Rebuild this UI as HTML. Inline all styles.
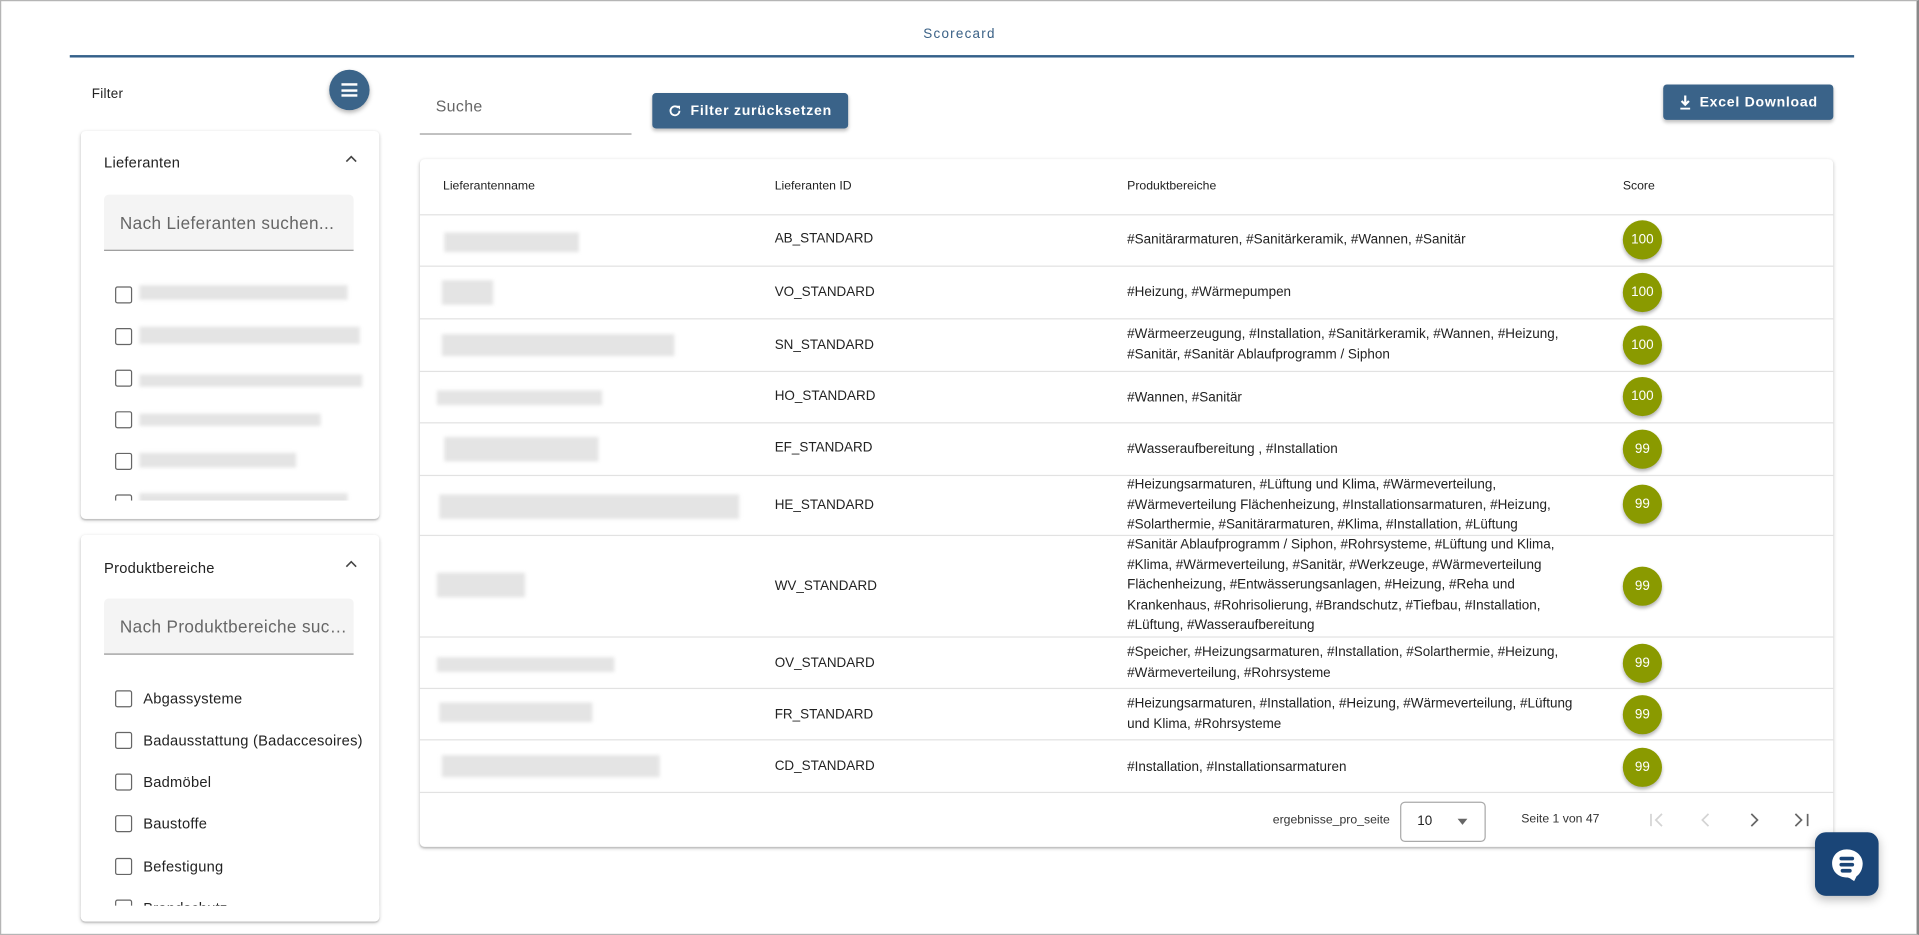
<!DOCTYPE html>
<html><head><meta charset="utf-8">
<style>
html,body{margin:0;padding:0;width:1919px;height:935px;overflow:hidden;background:#fff;}
#s{position:absolute;left:0;top:0;width:1568px;height:764px;transform:scale(1.22385);transform-origin:0 0;font-family:"Liberation Sans",sans-serif;color:#222;}
.a{position:absolute;}
.frame{left:0;top:0;width:1565px;height:762px;border:1px solid #b5b5b5;border-right:2px solid #888;}
.card{background:#fff;border-radius:4px;box-shadow:0 1px 3px rgba(0,0,0,.2),0 1px 1px rgba(0,0,0,.12);}
.btn{background:#3a6389;color:#fff;border-radius:3px;font-size:11.5px;font-weight:bold;letter-spacing:.6px;box-shadow:0 2px 3px rgba(0,0,0,.25);display:flex;align-items:center;justify-content:center;gap:7px;}
.search{background:#f4f4f4;border-bottom:1px solid #888;border-radius:4px 4px 0 0;font-size:14px;color:#666;padding-left:13px;box-sizing:border-box;line-height:46px;letter-spacing:.3px;white-space:nowrap;overflow:hidden;text-overflow:ellipsis;}
.cb{width:12px;height:12px;border:1.5px solid #666;border-radius:2px;}
.blur{background:#e4e4e4;filter:blur(1.5px);}
.lbl{font-size:12px;color:#222;letter-spacing:.2px;}
.hd{font-size:10px;color:#222;}
.row{border-bottom:1px solid #e2e2e2;left:0;width:1155px;}
.cell{font-size:11px;color:#222;line-height:16.5px;}
.sc{width:32px;height:32px;border-radius:50%;background:#8a9a00;color:#fff;font-size:11px;display:flex;align-items:center;justify-content:center;box-shadow:0 2px 3px rgba(0,0,0,.3);}
</style></head><body><div id="s">
<div class="a frame"></div>
<div class="a" style="left:0;width:1568px;top:22px;text-align:center;font-size:11px;color:#3a6186;letter-spacing:1px;">Scorecard</div>
<div class="a" style="left:57px;top:45px;width:1458px;height:2px;background:#34608a;"></div>

<div class="a lbl" style="left:75px;top:71px;font-size:11px;">Filter</div>
<div class="a" style="left:269px;top:57px;width:33px;height:33px;border-radius:50%;background:#3b6489;box-shadow:0 2px 4px rgba(0,0,0,.3);">
 <div class="a" style="left:10px;top:11px;width:13px;height:2px;background:#fff"></div>
 <div class="a" style="left:10px;top:15.5px;width:13px;height:2px;background:#fff"></div>
 <div class="a" style="left:10px;top:20px;width:13px;height:2px;background:#fff"></div>
</div>

<div class="a card" style="left:66px;top:107px;width:244px;height:317px;overflow:hidden;">
 <div class="a lbl" style="left:19px;top:19px;">Lieferanten</div>
 <svg class="a" style="left:216px;top:19px" width="10" height="8"><path d="M1 6L5 2L9 6" stroke="#444" stroke-width="1.3" fill="none"/></svg>
 <div class="a search" style="left:19px;top:52px;width:204px;height:46px;">Nach Lieferanten suchen...</div>
 <div class="a cb" style="left:28px;top:127px"></div><div class="a blur" style="left:48px;top:126px;width:170px;height:12px"></div>
 <div class="a cb" style="left:28px;top:161px"></div><div class="a blur" style="left:48px;top:160px;width:180px;height:14px"></div>
 <div class="a cb" style="left:28px;top:195px"></div><div class="a blur" style="left:48px;top:199px;width:182px;height:10px"></div>
 <div class="a cb" style="left:28px;top:229px"></div><div class="a blur" style="left:48px;top:231px;width:148px;height:10px"></div>
 <div class="a cb" style="left:28px;top:263px"></div><div class="a blur" style="left:48px;top:263px;width:128px;height:12px"></div>
 <div class="a cb" style="left:28px;top:297px"></div><div class="a blur" style="left:48px;top:296px;width:170px;height:10px"></div>
 <div class="a" style="left:0;top:302px;width:244px;height:15px;background:#fff"></div>
</div>

<div class="a card" style="left:66px;top:437px;width:244px;height:316px;overflow:hidden;">
 <div class="a lbl" style="left:19px;top:20px;">Produktbereiche</div>
 <svg class="a" style="left:216px;top:20px" width="10" height="8"><path d="M1 6L5 2L9 6" stroke="#444" stroke-width="1.3" fill="none"/></svg>
 <div class="a search" style="left:19px;top:52px;width:204px;height:46px;">Nach Produktbereiche suchen...</div>
 <div class="a cb" style="left:28px;top:127px"></div><div class="a lbl" style="left:51px;top:127px">Abgassysteme</div>
 <div class="a cb" style="left:28px;top:161px"></div><div class="a lbl" style="left:51px;top:161px;width:180px;white-space:nowrap;overflow:hidden;text-overflow:ellipsis">Badausstattung (Badaccesoires)</div>
 <div class="a cb" style="left:28px;top:195px"></div><div class="a lbl" style="left:51px;top:195px">Badmöbel</div>
 <div class="a cb" style="left:28px;top:229px"></div><div class="a lbl" style="left:51px;top:229px">Baustoffe</div>
 <div class="a cb" style="left:28px;top:264px"></div><div class="a lbl" style="left:51px;top:264px">Befestigung</div>
 <div class="a cb" style="left:28px;top:298px"></div><div class="a lbl" style="left:51px;top:298px">Brandschutz</div>
 <div class="a" style="left:0;top:303px;width:244px;height:13px;background:#fff"></div>
</div>

<div class="a" style="left:343px;top:79px;width:173px;height:30px;border-bottom:1px solid #999;font-size:13px;color:#666;"><span style="margin-left:13px;letter-spacing:.3px">Suche</span></div>
<div class="a btn" style="left:533px;top:76px;width:160px;height:29px;">
 <svg width="11" height="11" viewBox="0 0 12 12"><path d="M10 6A4 4 0 1 1 8.8 3.2" stroke="#fff" stroke-width="1.6" fill="none"/><path d="M7 1.5h3.5V5z" fill="#fff"/></svg>Filter zurücksetzen</div>
<div class="a btn" style="left:1359px;top:69px;width:139px;height:29px;">
 <svg width="10" height="12" viewBox="0 0 10 12"><path d="M5 0v7M2 4.5L5 7.5L8 4.5" stroke="#fff" stroke-width="1.8" fill="none"/><rect x="1" y="10" width="8" height="1.5" fill="#fff"/></svg>Excel Download</div>

<div class="a card" style="left:343px;top:130px;width:1155px;height:562px;">
 <div class="a row" style="top:0;height:45px;"></div>
 <div class="a hd" style="left:19px;top:17px">Lieferantenname</div>
 <div class="a hd" style="left:290px;top:17px">Lieferanten ID</div>
 <div class="a hd" style="left:578px;top:17px">Produktbereiche</div>
 <div class="a hd" style="left:983px;top:17px">Score</div>

 <div class="a row" style="top:45px;height:42px"></div>
 <div class="a blur" style="left:20px;top:60px;width:110px;height:16px"></div>
 <div class="a cell" style="left:290px;top:57px">AB_STANDARD</div>
 <div class="a cell" style="left:578px;top:58px">#Sanitärarmaturen, #Sanitärkeramik, #Wannen, #Sanitär</div>
 <div class="a sc" style="left:983px;top:50px">100</div>

 <div class="a row" style="top:88px;height:42px"></div>
 <div class="a blur" style="left:18px;top:99px;width:42px;height:20px"></div>
 <div class="a cell" style="left:290px;top:101px">VO_STANDARD</div>
 <div class="a cell" style="left:578px;top:101px">#Heizung, #Wärmepumpen</div>
 <div class="a sc" style="left:983px;top:93px">100</div>

 <div class="a row" style="top:131px;height:42px"></div>
 <div class="a blur" style="left:18px;top:143px;width:190px;height:18px"></div>
 <div class="a cell" style="left:290px;top:144px">SN_STANDARD</div>
 <div class="a cell" style="left:578px;top:135px">#Wärmeerzeugung, #Installation, #Sanitärkeramik, #Wannen, #Heizung,<br>#Sanitär, #Sanitär Ablaufprogramm / Siphon</div>
 <div class="a sc" style="left:983px;top:136px">100</div>

 <div class="a row" style="top:173px;height:42px"></div>
 <div class="a blur" style="left:14px;top:189px;width:135px;height:12px"></div>
 <div class="a cell" style="left:290px;top:186px">HO_STANDARD</div>
 <div class="a cell" style="left:578px;top:187px">#Wannen, #Sanitär</div>
 <div class="a sc" style="left:983px;top:178px">100</div>

 <div class="a row" style="top:216px;height:42px"></div>
 <div class="a blur" style="left:20px;top:227px;width:126px;height:20px"></div>
 <div class="a cell" style="left:290px;top:228px">EF_STANDARD</div>
 <div class="a cell" style="left:578px;top:229px">#Wasseraufbereitung , #Installation</div>
 <div class="a sc" style="left:983px;top:221px">99</div>

 <div class="a row" style="top:258px;height:49px"></div>
 <div class="a blur" style="left:16px;top:274px;width:245px;height:20px"></div>
 <div class="a cell" style="left:290px;top:275px">HE_STANDARD</div>
 <div class="a cell" style="left:578px;top:258px">#Heizungsarmaturen, #Lüftung und Klima, #Wärmeverteilung,<br>#Wärmeverteilung Flächenheizung, #Installationsarmaturen, #Heizung,<br>#Solarthermie, #Sanitärarmaturen, #Klima, #Installation, #Lüftung</div>
 <div class="a sc" style="left:983px;top:266px">99</div>

 <div class="a row" style="top:307px;height:83px"></div>
 <div class="a blur" style="left:14px;top:338px;width:72px;height:20px"></div>
 <div class="a cell" style="left:290px;top:341px">WV_STANDARD</div>
 <div class="a cell" style="left:578px;top:307px">#Sanitär Ablaufprogramm / Siphon, #Rohrsysteme, #Lüftung und Klima,<br>#Klima, #Wärmeverteilung, #Sanitär, #Werkzeuge, #Wärmeverteilung<br>Flächenheizung, #Entwässerungsanlagen, #Heizung, #Reha und<br>Krankenhaus, #Rohrisolierung, #Brandschutz, #Tiefbau, #Installation,<br>#Lüftung, #Wasseraufbereitung</div>
 <div class="a sc" style="left:983px;top:333px">99</div>

 <div class="a row" style="top:390px;height:42px"></div>
 <div class="a blur" style="left:14px;top:407px;width:145px;height:12px"></div>
 <div class="a cell" style="left:290px;top:404px">OV_STANDARD</div>
 <div class="a cell" style="left:578px;top:395px">#Speicher, #Heizungsarmaturen, #Installation, #Solarthermie, #Heizung,<br>#Wärmeverteilung, #Rohrsysteme</div>
 <div class="a sc" style="left:983px;top:396px">99</div>

 <div class="a row" style="top:432px;height:42px"></div>
 <div class="a blur" style="left:16px;top:444px;width:125px;height:16px"></div>
 <div class="a cell" style="left:290px;top:446px">FR_STANDARD</div>
 <div class="a cell" style="left:578px;top:437px">#Heizungsarmaturen, #Installation, #Heizung, #Wärmeverteilung, #Lüftung<br>und Klima, #Rohrsysteme</div>
 <div class="a sc" style="left:983px;top:438px">99</div>

 <div class="a row" style="top:475px;height:42px"></div>
 <div class="a blur" style="left:18px;top:487px;width:178px;height:18px"></div>
 <div class="a cell" style="left:290px;top:488px">CD_STANDARD</div>
 <div class="a cell" style="left:578px;top:489px">#Installation, #Installationsarmaturen</div>
 <div class="a sc" style="left:983px;top:481px">99</div>

 <div class="a" style="left:697px;top:535px;font-size:10px;color:#333">ergebnisse_pro_seite</div>
 <div class="a" style="left:801px;top:525px;width:68px;height:31px;border:1px solid #aaa;border-radius:4px;font-size:11px;"><span class="a" style="left:13px;top:9px">10</span><span class="a" style="left:46px;top:13px;width:0;height:0;border-left:4px solid transparent;border-right:4px solid transparent;border-top:5px solid #666"></span></div>
 <div class="a" style="left:900px;top:534px;font-size:10px;color:#333">Seite 1 von 47</div>
 <svg class="a" style="left:1005px;top:534px" width="140" height="12" viewBox="0 0 140 12">
  <path d="M1 1v10M10 1L5 6l5 5" stroke="#d4d4d4" stroke-width="1.4" fill="none"/>
  <path d="M48 1L43 6l5 5" stroke="#d4d4d4" stroke-width="1.4" fill="none"/>
  <path d="M83 1l5 5-5 5" stroke="#666" stroke-width="1.4" fill="none"/>
  <path d="M119 1l5 5-5 5M129 1v10" stroke="#666" stroke-width="1.4" fill="none"/>
 </svg>
</div>

<div class="a" style="left:1483px;top:680px;width:52px;height:52px;border-radius:9px;background:#1a4577;box-shadow:0 3px 8px rgba(0,0,0,.25);">
 <svg class="a" style="left:11px;top:11px" width="31" height="31" viewBox="0 0 31 31"><path d="M15 3C8 3 3 8 3 14.5S8 26 15 26c2 0 3 1 6 3l2-4c3-2 5-6 5-10.5C28 8 22 3 15 3z" fill="#fff"/><rect x="9" y="9" width="12" height="3" rx="1.5" fill="#1a4577"/><rect x="9" y="14" width="12" height="3" rx="1.5" fill="#1a4577"/><rect x="10" y="19" width="9" height="3" rx="1.5" fill="#1a4577"/></svg>
</div>
</div></body></html>
